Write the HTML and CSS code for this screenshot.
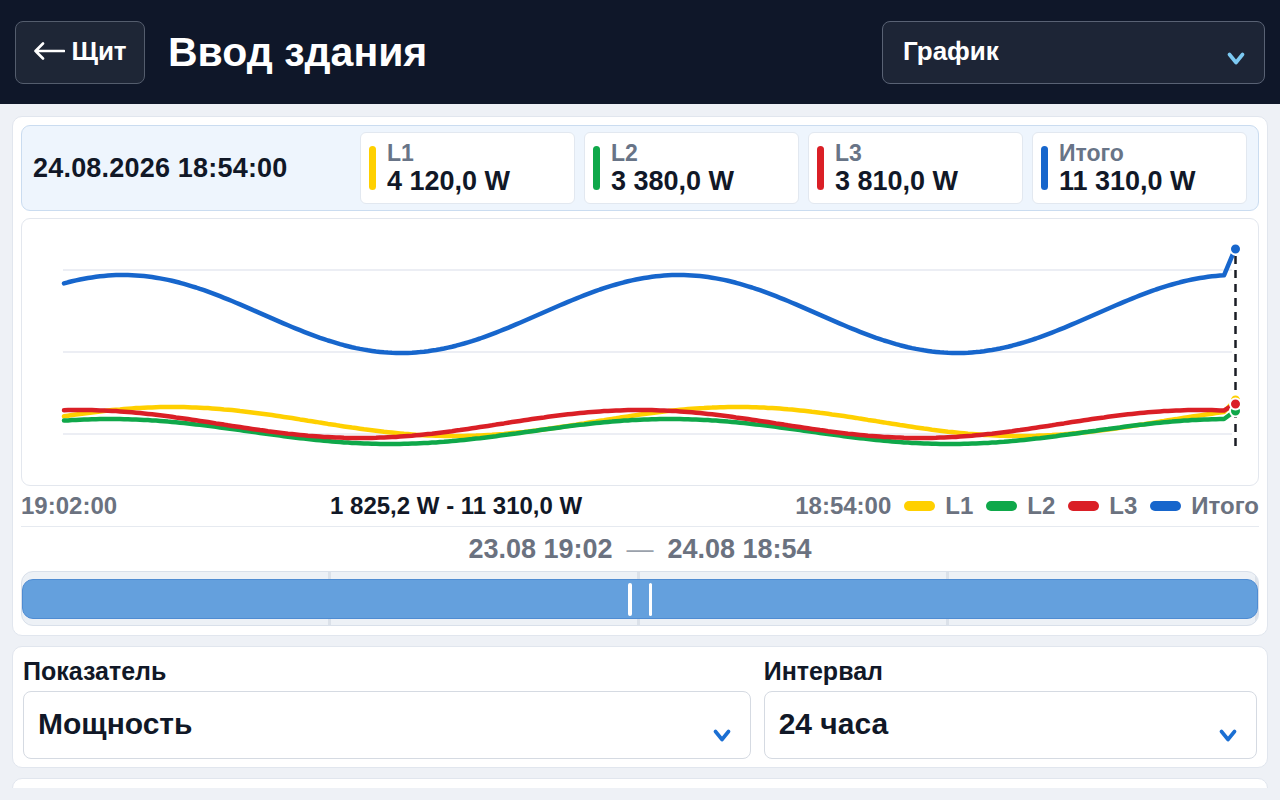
FILE: index.html
```html
<!DOCTYPE html>
<html lang="ru">
<head>
  <meta charset="UTF-8">
  <meta name="viewport" content="width=device-width, initial-scale=1.0">
  <title>Ввод здания</title>
  <link rel="stylesheet" href="styles.css">
</head>
<body>
  <header class="topbar">
    <button class="back-btn" type="button">
      <svg class="back-arrow" width="32" height="18" viewBox="0 0 32 18"><path d="M31 9H2.5M10 1.5L2.5 9l7.5 7.5" fill="none" stroke="#fff" stroke-width="2.6" stroke-linecap="round" stroke-linejoin="round"/></svg>
      Щит
    </button>
    <h1 class="page-title">Ввод здания</h1>
    <div class="view-select">
      <span>График</span>
      <svg class="chevron" width="18" height="13" viewBox="0 0 18 13"><path d="M2.5 2.5L9 10.5l6.5-8" fill="none" stroke="#7cc9f2" stroke-width="3.6" stroke-linecap="round" stroke-linejoin="round"/></svg>
    </div>
  </header>

  <main class="content">
    <section class="card chart-card">
      <div class="readout">
        <div class="readout-time">24.08.2026 18:54:00</div>
        <div class="phase">
          <span class="phase-bar l1"></span>
          <div>
            <div class="phase-name">L1</div>
            <div class="phase-value">4 120,0 W</div>
          </div>
        </div>
        <div class="phase">
          <span class="phase-bar l2"></span>
          <div>
            <div class="phase-name">L2</div>
            <div class="phase-value">3 380,0 W</div>
          </div>
        </div>
        <div class="phase">
          <span class="phase-bar l3"></span>
          <div>
            <div class="phase-name">L3</div>
            <div class="phase-value">3 810,0 W</div>
          </div>
        </div>
        <div class="phase">
          <span class="phase-bar total"></span>
          <div>
            <div class="phase-name">Итого</div>
            <div class="phase-value">11 310,0 W</div>
          </div>
        </div>
      </div>

      <div class="chart-box">
        <svg id="chart" width="1235" height="266" viewBox="0 0 1235 266"></svg>
      </div>

      <div class="chart-foot">
        <span class="foot-time">19:02:00</span>
        <span class="foot-range">1 825,2 W - 11 310,0 W</span>
        <div class="legend">
          <span class="foot-time">18:54:00</span>
          <span class="legend-item"><span class="swatch l1"></span>L1</span>
          <span class="legend-item"><span class="swatch l2"></span>L2</span>
          <span class="legend-item"><span class="swatch l3"></span>L3</span>
          <span class="legend-item"><span class="swatch total"></span>Итого</span>
        </div>
      </div>

      <div class="period">23.08 19:02<span class="period-dash">—</span>24.08 18:54</div>

      <div class="navigator">
        <div class="nav-seg"></div>
        <div class="nav-seg"></div>
        <div class="nav-seg"></div>
        <div class="nav-seg"></div>
        <div class="nav-thumb">
          <span class="grip"></span>
          <span class="grip"></span>
        </div>
      </div>
    </section>

    <section class="card form-card">
      <div class="field">
        <label class="field-label">Показатель</label>
        <div class="select">
          <span>Мощность</span>
          <svg class="chevron" width="18" height="13" viewBox="0 0 18 13"><path d="M2.5 2.5L9 10.5l6.5-8" fill="none" stroke="#1b6fd3" stroke-width="3.6" stroke-linecap="round" stroke-linejoin="round"/></svg>
        </div>
      </div>
      <div class="field">
        <label class="field-label">Интервал</label>
        <div class="select">
          <span>24 часа</span>
          <svg class="chevron" width="18" height="13" viewBox="0 0 18 13"><path d="M2.5 2.5L9 10.5l6.5-8" fill="none" stroke="#1b6fd3" stroke-width="3.6" stroke-linecap="round" stroke-linejoin="round"/></svg>
        </div>
      </div>
    </section>

    <section class="card more-card"></section>
  </main>

  <script>
    // Sample curves for the last 24h, in chart pixels
    const svg = document.getElementById("chart");
    const NS = "http://www.w3.org/2000/svg";

    function wave(base, amp, peak, period) {
      return x => base - amp * Math.cos(2 * Math.PI * (x - peak) / period);
    }

    const series = [
      { color: "#ffd000", fn: wave(202.5, 14.5, 150, 565), last: 181 },
      { color: "#0fa84a", fn: wave(212.5, 12.5, 88, 560), last: 192 },
      { color: "#da1f26", fn: wave(205, 14, 58, 560), last: 185 },
      { color: "#1766cc", fn: wave(95, 39, 101, 556), last: 30 }
    ];

    function add(tag, attrs) {
      const el = document.createElementNS(NS, tag);
      for (const k in attrs) el.setAttribute(k, attrs[k]);
      svg.appendChild(el);
      return el;
    }

    // grid
    [51, 133, 215].forEach(y => {
      add("line", { x1: 41, x2: 1210, y1: y, y2: y, stroke: "#e6e9f1", "stroke-width": 1.5 });
    });

    // lines
    series.forEach(s => {
      const pts = [];
      for (let x = 42; x <= 1204; x += 4) pts.push(x + "," + s.fn(x).toFixed(1));
      pts.push("1213," + s.last);
      add("polyline", {
        points: pts.join(" "), fill: "none", stroke: s.color,
        "stroke-width": 4.5, "stroke-linejoin": "round", "stroke-linecap": "round"
      });
    });

    // cursor
    add("line", { x1: 1213.5, x2: 1213.5, y1: 37, y2: 232, stroke: "#1a1d24", "stroke-width": 2.5, "stroke-dasharray": "8 6" });

    series.forEach(s => {
      add("circle", { cx: 1213.5, cy: s.last, r: 5.5, fill: s.color, stroke: "#fff", "stroke-width": 2 });
    });
  </script>
</body>
</html>
```

FILE: styles.css
```css
* {
  box-sizing: border-box;
}
html, body {
  margin: 0;
  height: 800px;
  overflow: hidden;
}
body {
  font-family: "Liberation Sans", Arial, sans-serif;
  background: #eef1f6;
  color: #111827;
}

/* top bar */
.topbar {
  height: 104px;
  background: #0f1729;
  display: flex;
  align-items: center;
  padding: 0 15px;
}
.back-btn {
  width: 130px;
  height: 63px;
  display: flex;
  align-items: center;
  justify-content: center;
  gap: 6px;
  background: #1e2636;
  border: 1.5px solid #545d6d;
  border-radius: 8px;
  color: #fff;
  font-family: inherit;
  font-size: 26px;
  font-weight: bold;
  padding: 0 0 2px;
}
.page-title {
  margin: 0 0 0 23px;
  color: #fff;
  font-size: 41px;
  font-weight: bold;
  flex: 1;
}
.view-select {
  width: 383px;
  height: 63px;
  display: flex;
  align-items: center;
  justify-content: space-between;
  padding: 0 19px 0 20px;
  background: #1d2536;
  border: 1.5px solid #596274;
  border-radius: 8px;
  color: #fff;
  font-size: 26px;
  font-weight: bold;
}
.view-select span {
  margin-bottom: 2px;
}
.view-select .chevron {
  margin-top: 12px;
}

/* layout */
.content {
  height: 684px;
  overflow: hidden;
  padding: 12px 12px 0;
  display: flex;
  flex-direction: column;
  gap: 10px;
}
.card {
  background: #fff;
  border: 1px solid #e1e6ee;
  border-radius: 10px;
  flex-shrink: 0;
}

/* chart card */
.chart-card {
  padding: 8px 8px 9px;
}
.readout {
  display: flex;
  align-items: center;
  gap: 9px;
  padding: 6px 11px;
  background: #eef5fd;
  border: 1px solid #cadcf0;
  border-radius: 9px;
}
.readout-time {
  flex: 1;
  font-size: 27px;
  font-weight: bold;
  letter-spacing: 0.2px;
}
.phase {
  width: 215px;
  height: 72px;
  display: flex;
  align-items: center;
  gap: 11px;
  padding: 0 8px;
  background: #fff;
  border: 1px solid #e2e8f0;
  border-radius: 6px;
}
.phase-bar {
  width: 7px;
  height: 44px;
  border-radius: 4px;
}
.phase-name {
  font-size: 23px;
  font-weight: bold;
  color: #687487;
  line-height: 26px;
}
.phase-value {
  font-size: 27px;
  font-weight: bold;
  line-height: 31px;
}
.l1 { background: #ffd000; }
.l2 { background: #0fa84a; }
.l3 { background: #da1f26; }
.total { background: #1766cc; }

.chart-box {
  margin-top: 7px;
  height: 268px;
  border: 1px solid #e3e7ee;
  border-radius: 9px;
}
.chart-box svg {
  display: block;
}

.chart-foot {
  height: 41px;
  display: flex;
  align-items: center;
  justify-content: space-between;
  border-bottom: 1px solid #e6eaf0;
  font-size: 24px;
  font-weight: bold;
}
.foot-time {
  color: #6b7280;
}
.legend {
  display: flex;
  align-items: center;
  gap: 13px;
  color: #6b7280;
}
.legend-item {
  display: flex;
  align-items: center;
  gap: 10px;
}
.swatch {
  width: 31px;
  height: 10px;
  border-radius: 5px;
}

.period {
  height: 44px;
  line-height: 44px;
  text-align: center;
  color: #6b7280;
  font-size: 27px;
  font-weight: bold;
}
.period-dash {
  margin: 0 14px;
  font-weight: normal;
  color: #9aa1ab;
}

.navigator {
  position: relative;
  height: 55px;
  display: flex;
  background: #edf1f6;
  border: 1px solid #d9e0ea;
  border-radius: 12px;
  overflow: hidden;
}
.nav-seg {
  flex: 1;
  border-right: 3px solid #dbe1e9;
}
.nav-seg:last-of-type {
  border-right: none;
}
.nav-thumb {
  position: absolute;
  top: 7px;
  bottom: 6px;
  left: 0;
  right: 0;
  display: flex;
  align-items: center;
  justify-content: center;
  gap: 17px;
  background: #64a0dd;
  border: 1px solid #4f8cd2;
  border-radius: 11px;
}
.grip {
  width: 3.5px;
  height: 33px;
  background: #fff;
  border-radius: 2px;
}

/* form card */
.form-card {
  display: grid;
  grid-template-columns: 59fr 40fr;
  gap: 13px;
  padding: 8px 10px;
}
.field-label {
  display: block;
  font-size: 25px;
  font-weight: bold;
  line-height: 32px;
  margin-bottom: 4px;
}
.select {
  height: 68px;
  display: flex;
  align-items: center;
  justify-content: space-between;
  padding: 0 19px 0 14px;
  border: 1px solid #d5dae2;
  border-radius: 8px;
  font-size: 30px;
  font-weight: bold;
}
.select span {
  margin-bottom: 2px;
}
.select .chevron {
  margin-top: 20px;
}

.more-card {
  height: 60px;
}
```
